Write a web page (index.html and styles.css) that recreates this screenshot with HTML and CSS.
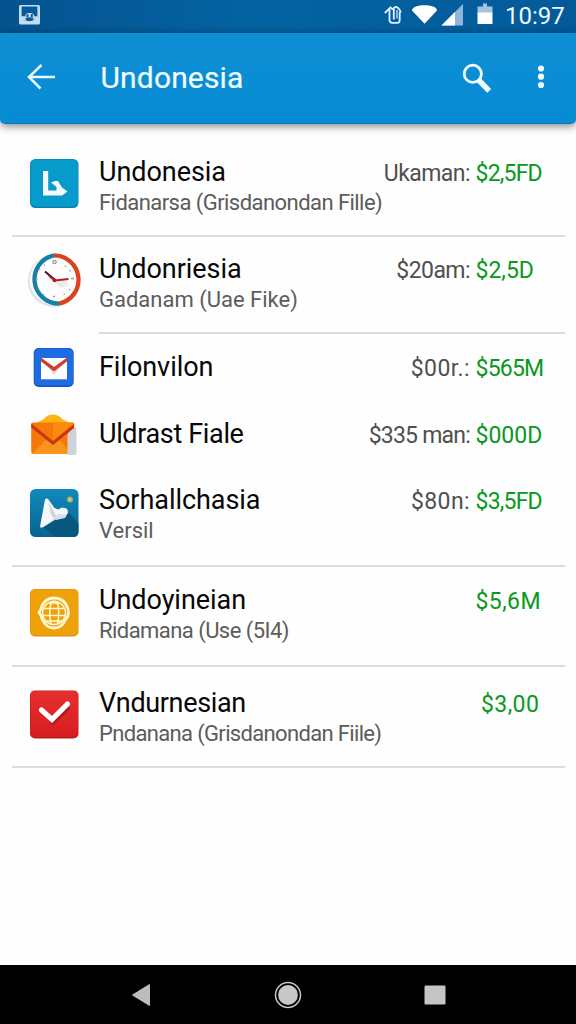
FILE: index.html
```html
<!DOCTYPE html>
<html lang="en">
<head>
<meta charset="utf-8">
<title>Undonesia</title>
<link rel="stylesheet" href="styles.css">
</head>
<body>
<div class="screen">
  <div class="statusbar">
    <svg class="status-app" width="21" height="20" viewBox="0 0 20 20" preserveAspectRatio="none"><rect width="20" height="19.500" rx="1.500" fill="#c3dcf2"/><path d="M2.500 1.500h15v10.500q-2 4-7.500 4t-7.500-4z" fill="#07589a"/><path d="M2.500 11l3 .5Q6.500 8 9 8h2q3 0 3.800 3.500l2.700-.5v3l-3 1q-4.500-1.500-9 0l-3-1z" fill="#c3dcf2"/><path d="M6 13q4-1.500 8 0-1 2.800-4 2.800T6 13z" fill="#07589a"/><ellipse cx="8" cy="10.700" rx="1.100" ry="1.600" fill="#07589a"/><ellipse cx="12.200" cy="10.700" rx="1.100" ry="1.600" fill="#07589a"/></svg>
    <svg class="status-icons" width="110" height="30" viewBox="384 0 110 30"><g fill="none" stroke="#e2f3ff" stroke-width="1.800"><path d="M384.800 13l5.700-5.500 2.500 2M389.500 9v11q0 2.800 3 2.800h5q2.200 0 2.200-2.800V12M393.800 19.500V8.500q0-1.500 2.200-1.500 2.500 0 5 5.500"/><path d="M397 10v8.500" stroke-width="1.200"/></g><path d="M412 10.500C412 3.500 437 3.500 437 10.500L424.500 23.800z" fill="#fff"/><path d="M441.500 25.500L463 4v21.500z" fill="#8fb7dc"/><path d="M441.500 25.500l13.500-13.500v13.500z" fill="#fff"/><path d="M477.500 13V6.500h5.500V3.500h4v3h5.500V13z" fill="#a3c4e2"/><path d="M477.500 12.500h15V24h-15z" fill="#fff"/></svg>
    <span class="clock">10:97</span>
  </div>
  <header class="appbar">
    <svg class="back" width="30" height="28" viewBox="0 0 30 28"><path d="M14.500 2L2 14l11.500 11.500M2 14h26" fill="none" stroke="#e9fbff" stroke-width="2.500"/></svg>
    <h1 class="heading">Undonesia</h1>
    <svg class="search" width="30" height="30" viewBox="0 0 30 30"><circle cx="10.800" cy="10.800" r="8.600" fill="none" stroke="#f2fdff" stroke-width="2.800"/><path d="M16 16l3 3" stroke="#f2fdff" stroke-width="4"/><path d="M18 18.500l7.300 7.500" stroke="#f2fdff" stroke-width="5.400" stroke-linecap="square"/></svg>
    <svg class="more" width="8" height="26" viewBox="0 0 8 26"><g fill="#effcff"><circle cx="4" cy="4.500" r="3.100"/><circle cx="4" cy="12.700" r="3.100"/><circle cx="4" cy="21" r="3.100"/></g></svg>
  </header>
  <main class="list">
    <article class="row row-bing">
      <svg class="icon" width="60" height="60" viewBox="0 0 60 60"><rect x="6" y="6" width="48.500" height="49" rx="5.500" fill="#087fac"/><rect x="6.500" y="6.500" width="47.500" height="47" rx="5" fill="#079bcb"/><path d="M19 18h5.200v19.500h8.300V34L27 29.500l4-1.500h3l4 6.500 5.500 4L38 42.500H19z" fill="#f4fbff"/></svg>
      <div class="copy"><div class="name">Undonesia</div><div class="sub tight">Fidanarsa (Grisdanondan Fille)</div></div>
      <div class="label tight">Ukaman:</div><div class="value packed">$2,5FD</div>
    </article>
    <hr class="rule">
    <article class="row row-clock">
      <svg class="icon" width="60" height="60" viewBox="0 0 60 60"><circle cx="29.800" cy="31" r="26" fill="#dfe4e8"/><circle cx="30.300" cy="29.700" r="24.500" fill="#fdfdfd"/><path d="M30 5.300a24.400 24.400 0 0 0 5 48.300" fill="none" stroke="#1680a6" stroke-width="4.300"/><path d="M30 5.300a24.400 24.400 0 0 1 5 48.300" fill="none" stroke="#dd421e" stroke-width="4.300"/><path d="M30 32l7 6 8-3-5-5z" fill="#ececec"/><g fill="none" stroke="#999" stroke-width="1.300"><circle cx="30.500" cy="12" r="1.700"/><path d="M41 15.500l1 1.500M45.500 20l1 1.500M47 28.500h3M45 39l1 1M40 43.500l.5 1.200M29 46.500h2M20 44l-.5 1M15 38.500l-1 .8M11.500 29h2M15 18.500l1.200 1M20 14.500l.5 1"/></g><path d="M21 21.500l9.500 8" stroke="#50171b" stroke-width="2.200"/><path d="M25 26l6 4.500 13.500-1.500" fill="none" stroke="#b01f20" stroke-width="2"/><circle cx="30.500" cy="30.300" r="2" fill="#b32024"/></svg>
      <div class="copy"><div class="name">Undonriesia</div><div class="sub">Gadanam (Uae Fike)</div></div>
      <div class="label tight">$20am:</div><div class="value">$2,5D</div>
    </article>
    <hr class="rule rule-inset">
    <article class="row row-mail">
      <svg class="icon" width="60" height="60" viewBox="0 0 60 60"><rect x="9.700" y="10" width="40" height="39" rx="5" fill="#1555be"/><rect x="10.500" y="10.500" width="38.500" height="37" rx="4.500" fill="#1d6ce3"/><path d="M17 20h26v21.300H17z" fill="#fcfdff"/><path d="M22 26l8 8 8-7-8 10z" fill="#d9dadd"/><path d="M16.800 19.500L30 29l13.200-9.500v3.700L30 33.500 16.800 23.200z" fill="#cf3d29"/></svg>
      <div class="copy"><div class="name">Filonvilon</div></div>
      <div class="label loose">$00r.:</div><div class="value packed">$565M</div>
    </article>
    <article class="row row-letter">
      <svg class="icon" width="60" height="60" viewBox="0 0 60 60"><path d="M10 19l10-5q3-4.500 9-4.500t9 4.500l10 5z" fill="#fdb515"/><rect x="7.200" y="17.500" width="43" height="31.500" rx="2" fill="#f57909"/><path d="M29 17.500h21v4L29 38z" fill="#fb8a0d"/><path d="M8 49l14-14 7 5 7-5 11 14z" fill="#fa951c"/><path d="M43.500 30q1-5 9-8v26q0 2-2 2h-7z" fill="#cfd2d7"/><path d="M7.200 18.500L29 36l21-17v4L29 40 7.200 22.500z" fill="#cb3510"/></svg>
      <div class="copy"><div class="name snug">Uldrast Fiale</div></div>
      <div class="label packed">$335 man:</div><div class="value">$000D</div>
    </article>
    <article class="row row-bird">
      <svg class="icon" width="60" height="60" viewBox="0 0 60 60"><defs><linearGradient id="sky" x2="0" y2="1"><stop stop-color="#1189bd"/><stop offset="1" stop-color="#07648f"/></linearGradient></defs><rect x="6" y="6" width="48.500" height="48" rx="5.500" fill="url(#sky)"/><path d="M42 27l12.500 13v9q0 5-5.500 5H32L17 43z" fill="#07577e"/><path d="M21 16.500q1.800-1.800 3.500 0l6 8.500 4 1.500q3.500-3 6-1.500 3.500 0 3.500 5l-2.500 3.500-10 2.500-12 8q-4 1.800-3.300-1.500z" fill="#f4f7fa"/><path d="M24 18l3 13 3 5-9 7 13-8-3-4z" fill="#cdd4dc"/><path d="M30 35l4-4 9 .5-2 3.500-9 2z" fill="#d9e0e7"/><circle cx="46" cy="16.500" r="3" fill="#a7b066"/><circle cx="46" cy="16.500" r="1.500" fill="#d5cb76"/></svg>
      <div class="copy"><div class="name">Sorhallchasia</div><div class="sub">Versil</div></div>
      <div class="label loose">$80n:</div><div class="value packed">$3,5FD</div>
    </article>
    <hr class="rule">
    <article class="row row-globe">
      <svg class="icon" width="60" height="60" viewBox="0 0 60 60"><rect x="6" y="6" width="48.500" height="47.500" rx="5" fill="#dc8d08"/><rect x="6.500" y="6.500" width="47.500" height="46" rx="4.500" fill="#efa109"/><g fill="none" stroke="#fff7cf"><path d="M30 15q8 0 12 6.500 2.500 4 2.500 8t-2.500 6.500q-4 9-12 9t-12-9q-1-4-3-6.500 2-2.500 3-7 4-7.500 12-7.500z" stroke-width="2.800"/><circle cx="30" cy="30" r="11.500" stroke-width="1.500"/><path d="M20 25.500h20M18 32.500h24M22 38h16" stroke-width="1.700"/><path d="M27 20q-2.500 10 0 21M33.500 20q2.500 10 0 21" stroke-width="1.500"/><path d="M25.500 21q4.500-4 9.500 0" stroke-width="3"/></g></svg>
      <div class="copy"><div class="name">Undoyineian</div><div class="sub tight">Ridamana (Use (5I4)</div></div>
      <div class="label"></div><div class="value loose">$5,6M</div>
    </article>
    <hr class="rule">
    <article class="row row-check">
      <svg class="icon" width="60" height="60" viewBox="0 0 60 60"><defs><linearGradient id="red" x2="0" y2="1"><stop stop-color="#e52f2d"/><stop offset="1" stop-color="#d81d21"/></linearGradient></defs><rect x="6" y="6.500" width="48.500" height="48" rx="5" fill="#b81d20"/><rect x="6.500" y="7" width="47.500" height="46" rx="4.500" fill="url(#red)"/><path d="M21 31l7.500 8L44 22l2 3-17.500 17z" fill="#aa1d22"/><path d="M17.500 26l10.500 9.500L43.500 20" fill="none" stroke="#fff" stroke-width="5.200" stroke-linecap="round"/></svg>
      <div class="copy"><div class="name snug">Vndurnesian</div><div class="sub tighter">Pndanana (Grisdanondan Fiile)</div></div>
      <div class="label"></div><div class="value loose value-short">$3,00</div>
    </article>
    <hr class="rule">
  </main>
  <nav class="navbar">
    <svg class="nav-back" width="20" height="24" viewBox="0 0 20 24"><path d="M1.500 12L18.500 1.500v21z" fill="#bdbdbd" stroke="#bdbdbd" stroke-linejoin="round"/></svg>
    <svg class="nav-home" width="28" height="28" viewBox="0 0 28 28"><circle cx="14" cy="14" r="12.500" fill="none" stroke="#c8c8c8" stroke-width="1.500"/><circle cx="14" cy="14" r="9.900" fill="#c8c8c8"/></svg>
    <svg class="nav-recent" width="22" height="20" viewBox="0 0 22 20"><rect x=".5" y=".5" width="21" height="19" rx="1.200" fill="#c5c5c5"/></svg>
  </nav>
</div>
</body>
</html>
```
FILE: styles.css
```css
* { box-sizing: border-box; }
body { margin: 0; background: #fdfefd; font-family: Roboto, "Noto Sans", sans-serif; }
svg { display: block; flex: none; }
.screen { width: 576px; height: 1024px; display: flex; flex-direction: column; overflow: hidden; }

.statusbar { height: 33px; flex: none; display: flex; background: linear-gradient(90deg, #04538f, #0463a2 45%, #035a99); color: #eef8ff; }
.status-app { margin: 5px 0 0 18.5px; }
.status-icons { margin-left: 344.5px; }
.clock { margin: 1px 0 0 11px; font-size: 24px; line-height: 30px; letter-spacing: 0; }

.appbar { height: 91px; flex: none; display: flex; background: linear-gradient(#0e8fd3, #078bd5); border-radius: 0 0 5px 5px; border-bottom: 1px solid #0a79bb; box-shadow: 0 2px 9px rgba(0, 0, 0, .5); color: #effcff; }
.back { margin: 30px 0 0 27px; }
.heading { width: 220px; margin: 30px 0 0 43.5px; font-size: 30px; font-weight: 400; line-height: 30px; letter-spacing: .15px; -webkit-text-stroke: .2px #effcff; }
.search { margin: 30px 0 0 141.5px; }
.more { margin: 31px 0 0 44.5px; }

.list { flex: 1; display: flex; flex-direction: column; }
.rule { width: 553px; height: 2px; margin: 0 0 -1px 12px; border: 0; flex: none; background: #dbdcdf; }
.rule-inset { width: 466px; margin-left: 99px; }
.row { flex: none; display: grid; grid-template-columns: 75px 220px 1fr 101px; align-items: start; padding-left: 24px; white-space: nowrap; }
.name { height: 30px; font-size: 27px; line-height: 30px; letter-spacing: -.05px; color: #080808; }
.sub { height: 30px; font-size: 22px; line-height: 32px; color: #5c5c5c; }
.label, .value { padding-top: 2px; font-size: 23px; line-height: 30px; }
.label { margin-right: 5px; justify-self: end; color: #505050; }
.value { padding-left: .5px; color: #0b9822; }
.name.snug { letter-spacing: -.35px; }
.tight { letter-spacing: -.55px; }
.tighter { letter-spacing: -.66px; }
.packed { letter-spacing: -.78px; }
.loose { letter-spacing: .4px; }
.value-short { padding-left: 6px; }

.row-bing { height: 111px; padding-top: 33px; }
.row-bing .icon { margin-top: -4.5px; }
.row-clock { height: 96px; padding-top: 18px; }
.row-clock .icon { margin-top: -4px; }
.row-mail { height: 67px; padding-top: 18.5px; }
.row-mail .icon { margin-top: -14px; }
.row-letter { height: 67px; padding-top: 18.5px; }
.row-letter .icon { margin-top: -13.5px; }
.row-bird { height: 98px; padding-top: 18px; }
.row-bird .icon { margin-top: -2px; }
.row-globe { height: 99px; padding-top: 18.5px; }
.row-globe .icon { margin-top: -2px; }
.row-check { height: 100px; padding-top: 22px; }
.row-check .icon { margin-top: -4px; }

.navbar { height: 59px; flex: none; display: flex; background: #000; }
.nav-back { margin: 17.5px 0 0 131px; }
.nav-home { margin: 15.5px 0 0 122.5px; }
.nav-recent { margin: 19.5px 0 0 122.5px; }
```
